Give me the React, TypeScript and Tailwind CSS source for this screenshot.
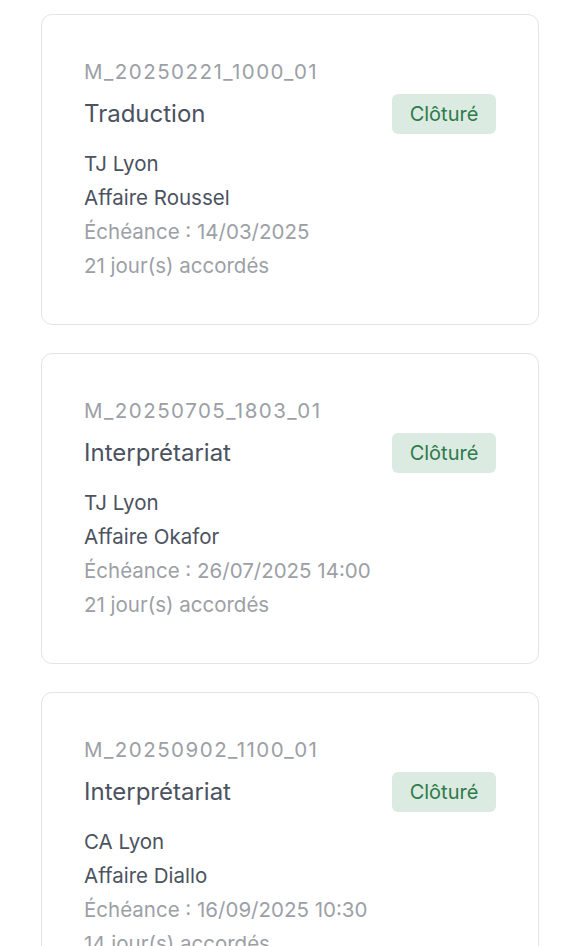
type Mission = {
  id: string;
  type: string;
  court: string;
  caseName: string;
  deadline: string;
  days: string;
};

const missions: Mission[] = [
  {
    id: 'M_20250221_1000_01',
    type: 'Traduction',
    court: 'TJ Lyon',
    caseName: 'Affaire Roussel',
    deadline: 'Échéance : 14/03/2025',
    days: '21 jour(s) accordés'
  },
  {
    id: 'M_20250705_1803_01',
    type: 'Interprétariat',
    court: 'TJ Lyon',
    caseName: 'Affaire Okafor',
    deadline: 'Échéance : 26/07/2025 14:00',
    days: '21 jour(s) accordés'
  },
  {
    id: 'M_20250902_1100_01',
    type: 'Interprétariat',
    court: 'CA Lyon',
    caseName: 'Affaire Diallo',
    deadline: 'Échéance : 16/09/2025 10:30',
    days: '14 jour(s) accordés'
  }
];

const MissionCard = ({ mission }: { mission: Mission }) => (
  <article className="rounded-[11px] border border-[#e3e4e6] bg-white px-[42px] pt-[43px] pb-[41px]">
    <p className="text-[20.5px] leading-[28px] tracking-[0.072em] text-[#9ca0a6]">{mission.id}</p>
    <div className="mt-2 flex h-10 items-center justify-between">
      <h3 className="text-[24px] font-normal leading-8 text-[#4b5260]">{mission.type}</h3>
      <span className="flex h-10 w-[104px] items-center justify-center rounded-[6px] bg-[#dcebe2] text-[20px] text-[#2e7a4b]">
        Clôturé
      </span>
    </div>
    <div className="mt-[13px] text-[20.5px] leading-[34px]">
      <p className="text-[#4b5260]">{mission.court}</p>
      <p className="text-[#4b5260]">{mission.caseName}</p>
      <p className="text-[#9ca0a6]">{mission.deadline}</p>
      <p className="text-[#9ca0a6]">{mission.days}</p>
    </div>
  </article>
);

const App = () => (
  <div className="min-h-screen bg-white font-['Inter',sans-serif]">
    <div className="flex flex-col gap-7 px-[41px] pt-[14px] pb-10">
      {missions.map((m) => (
        <MissionCard key={m.id} mission={m} />
      ))}
    </div>
  </div>
);

export default App;
